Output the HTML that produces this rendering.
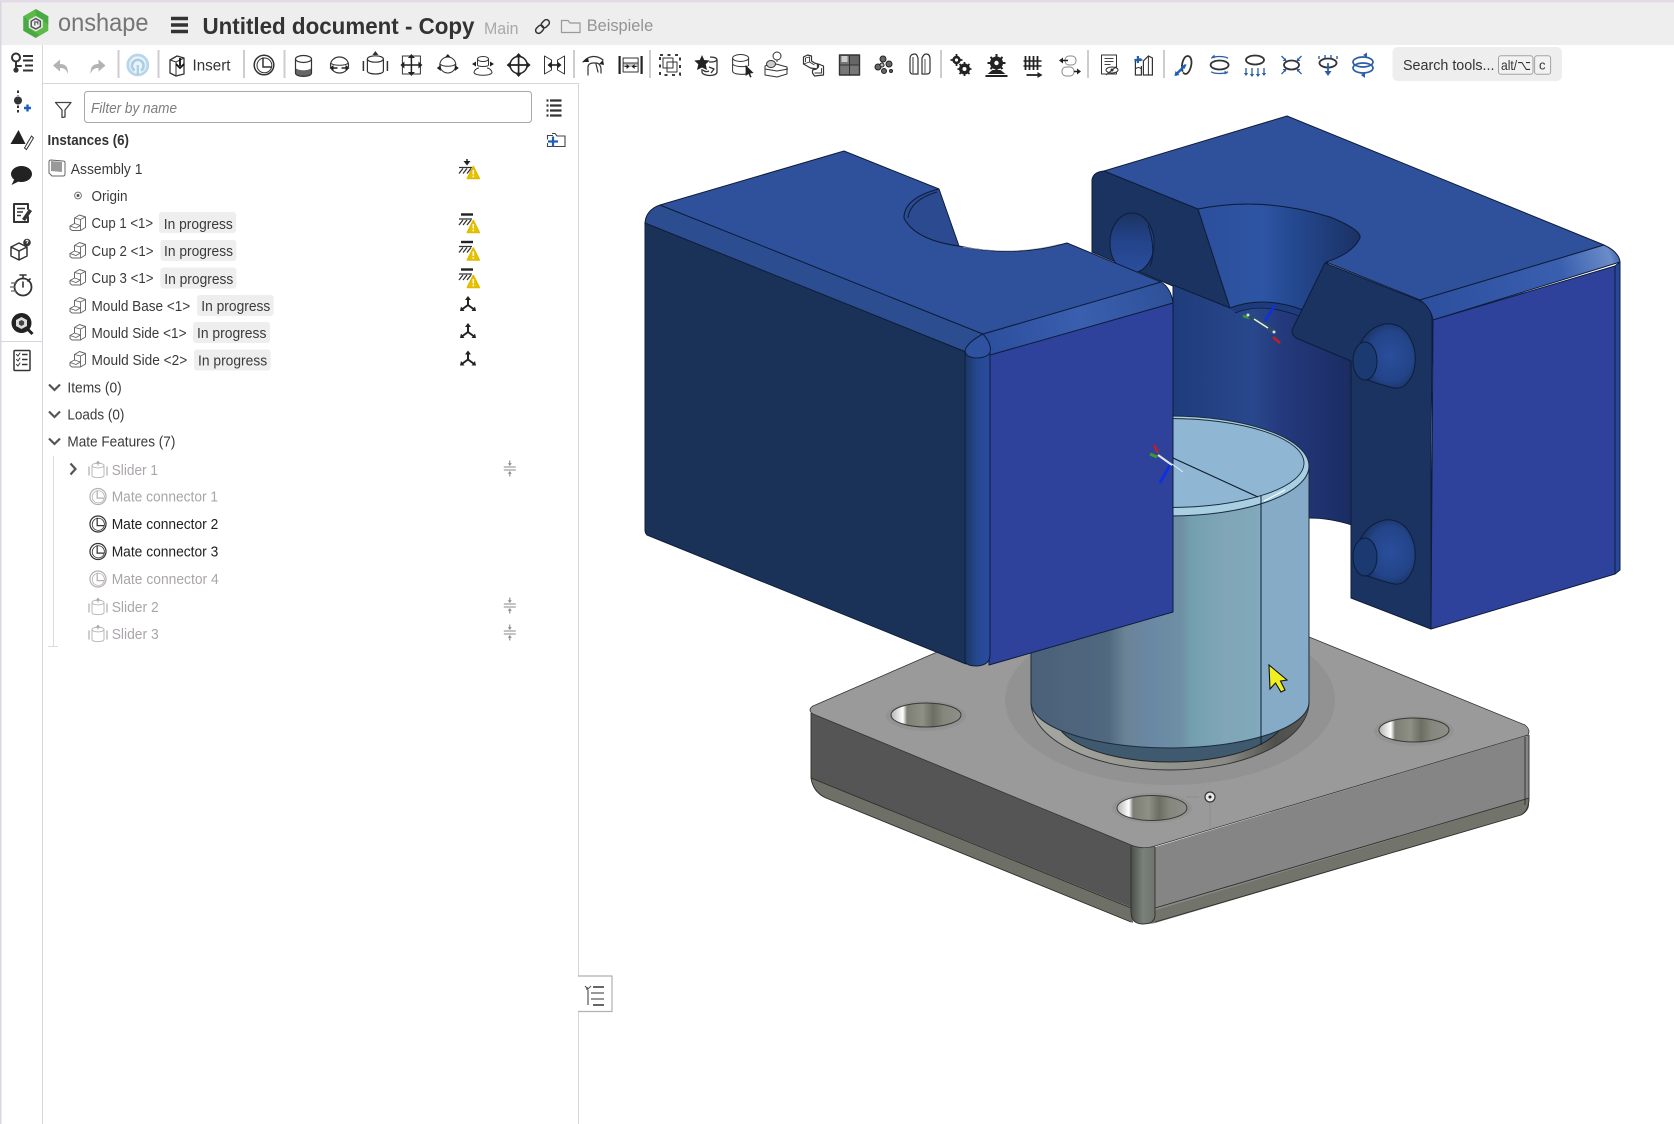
<!DOCTYPE html>
<html><head><meta charset="utf-8"><title>Onshape</title>
<style>
html,body{margin:0;padding:0;background:#fff;width:1674px;height:1124px;overflow:hidden}
svg{display:block}
text{font-family:"Liberation Sans",sans-serif;fill:#333}
.t{font-size:15px;fill:#3a3a3a}
.g{font-size:15px;fill:#aaa5aa}
.d{font-size:15px;fill:#222}
.i{fill:none;stroke:#333;stroke-width:1.5;stroke-linecap:round;stroke-linejoin:round}
.b{fill:none;stroke:#2a5ea8;stroke-width:1.5;stroke-linecap:round;stroke-linejoin:round}
.e{stroke:#0e1d3c;stroke-width:1;stroke-linejoin:round}
.e2{fill:none;stroke:#0e1d3c;stroke-width:1}
.k{fill:none;stroke:#333;stroke-width:1;stroke-linejoin:round}
</style></head><body>
<svg xmlns="http://www.w3.org/2000/svg" width="1674" height="1124" viewBox="0 0 1674 1124">
<defs>
<linearGradient id="pist" x1="1031" x2="1309" y1="0" y2="0" gradientUnits="userSpaceOnUse">
<stop offset="0" stop-color="#4b6079"/><stop offset=".28" stop-color="#50697f"/><stop offset=".34" stop-color="#6b8396"/><stop offset=".43" stop-color="#6a88a4"/><stop offset=".54" stop-color="#6e8fa5"/><stop offset=".58" stop-color="#74a0ae"/><stop offset=".7" stop-color="#80a6b8"/><stop offset=".8" stop-color="#7fa8b8"/><stop offset=".83" stop-color="#85abc6"/><stop offset="1" stop-color="#85abc8"/>
</linearGradient>
<linearGradient id="cav" x1="1173" x2="1352" y1="0" y2="0" gradientUnits="userSpaceOnUse">
<stop offset="0" stop-color="#1f3c7c"/><stop offset=".45" stop-color="#29478c"/><stop offset=".62" stop-color="#24397c"/><stop offset="1" stop-color="#1b2c62"/>
</linearGradient>
<linearGradient id="fun" x1="1198" x2="1360" y1="0" y2="0" gradientUnits="userSpaceOnUse">
<stop offset="0" stop-color="#2c4f9c"/><stop offset=".4" stop-color="#2d55a3"/><stop offset=".6" stop-color="#24488f"/><stop offset="1" stop-color="#1b3264"/>
</linearGradient>
<linearGradient id="cs" x1="964" x2="990" y1="0" y2="0" gradientUnits="userSpaceOnUse">
<stop offset="0" stop-color="#1b3560"/><stop offset=".5" stop-color="#26488e"/><stop offset="1" stop-color="#2a4ca0"/>
</linearGradient>
<linearGradient id="strip" x1="990" y1="345" x2="1170" y2="290" gradientUnits="userSpaceOnUse">
<stop offset="0" stop-color="#2c4f9e"/><stop offset=".5" stop-color="#3a5fae"/><stop offset="1" stop-color="#2e5199"/>
</linearGradient>
<linearGradient id="strip2" x1="1425" y1="310" x2="1620" y2="255" gradientUnits="userSpaceOnUse">
<stop offset="0" stop-color="#2c4f9e"/><stop offset=".7" stop-color="#3a5fae"/><stop offset=".95" stop-color="#6b8cc8"/><stop offset="1" stop-color="#3a5fae"/>
</linearGradient>
<radialGradient id="boss" cx=".55" cy=".5" r=".6"><stop offset="0" stop-color="#2a4e9c"/><stop offset=".65" stop-color="#234488"/><stop offset="1" stop-color="#19305e"/></radialGradient>
<linearGradient id="hl" x1="0" x2="0" y1="0" y2="1"><stop offset="0" stop-color="#1b3360"/><stop offset=".45" stop-color="#234389"/><stop offset="1" stop-color="#2b4f9e"/></linearGradient>
<linearGradient id="hole" x1="0" x2="1" y1="0" y2="0"><stop offset="0" stop-color="#b5b5b0"/><stop offset=".12" stop-color="#e8e8e8"/><stop offset=".17" stop-color="#fff"/><stop offset=".23" stop-color="#7e7e76"/><stop offset=".45" stop-color="#8e9084"/><stop offset=".6" stop-color="#6c6e64"/><stop offset=".75" stop-color="#85867c"/><stop offset="1" stop-color="#8e8f88"/></linearGradient>
<linearGradient id="corn" x1="0" x2="1" y1="0" y2="0"><stop offset="0" stop-color="#4b4f4b"/><stop offset=".5" stop-color="#7a807a"/><stop offset="1" stop-color="#6e736c"/></linearGradient>
<linearGradient id="rec" x1="1031" x2="1309" y1="0" y2="0" gradientUnits="userSpaceOnUse"><stop offset="0" stop-color="#a8a8a2"/><stop offset=".7" stop-color="#8a8a86"/><stop offset=".88" stop-color="#4f4f4c"/><stop offset="1" stop-color="#5a5a56"/></linearGradient>

<g id="part"><path d="M-8 3.500L-3.500 1V-4.500L1.500-7.500 7.500-5.500V5L2.500 8H-6L-8 6.500z" fill="#fff" stroke="#666" stroke-width="1" stroke-linejoin="round"/><path d="M-8 3.500L-2 5.500 2.500 3V8M-3.500 1L2.500 3V-3L-3.500-4.500M2.500-3L7.500-5.500" fill="none" stroke="#666" stroke-width=".9"/></g>
<g id="mc"><circle r="9.800" fill="none" stroke="currentColor" stroke-width="1.500"/><circle cx=".4" cy=".4" r="7.400" fill="none" stroke="currentColor" stroke-width="1"/><path d="M-1-7.600V2H8" fill="none" stroke="currentColor" stroke-width="1.500"/></g>
<g id="cyl"><ellipse cy="-6" rx="8" ry="3.200" fill="none" stroke="currentColor" stroke-width="1.200"/><path d="M-8-6V6c0 4 16 4 16 0V-6" fill="none" stroke="currentColor" stroke-width="1.200"/><path d="M-3-12h6M0-14l-3 4h6z" fill="currentColor" stroke="none"/><path d="M-12-4V6M12-4V6" stroke="currentColor" stroke-width="1.500"/></g>
<g id="warn"><path d="M0-6L-6 6H6z" fill="#e6c400" stroke="#e0bc00" stroke-linejoin="round" stroke-width="1.500"/><path d="M0-2.500V2M0 3.200v1.600" stroke="#fff" stroke-width="1.400"/></g>
<g id="hat"><path d="M-8 0h13M-8 6l4-5M-4 6l4-5M0 6l4-5" stroke="#333" stroke-width="1.300" fill="none"/></g>
<g id="tri"><path d="M0-5V1M0 1L-5.500 5M0 1L5.500 5" stroke="#222" stroke-width="2" fill="none"/><path d="M0-8l-3 4h6zM-8 7l1-4.500 3.500 4.500zM8 7l-1-4.500-3.500 4.500z" fill="#222"/></g>
<g id="sl"><path d="M-6-1.500H6M-6 1.500H6" stroke="#8a8a8a" stroke-width="1.100"/><path d="M0-8v5M0 8V3" stroke="#8a8a8a" stroke-width="1.100"/><path d="M0-2.600l-2-2.600h4zM0 2.600l-2 2.600h4z" fill="#8a8a8a"/></g>
<g id="sd"><g opacity=".45"><ellipse cy="-4" rx="6" ry="2.400" fill="none" stroke="#666"/><path d="M-6-4V6c0 2.800 12 2.800 12 0V-4" fill="none" stroke="#666"/><path d="M0-9l-2.500 3.200h5z" fill="#444"/><path d="M0-7v3" stroke="#444"/><path d="M-9-3V6M9-3V6" stroke="#666" stroke-width="1.400"/></g></g>
</defs>

<!-- title bar -->
<rect width="1674" height="45" fill="#eeeeee"/>
<rect width="1674" height="2.500" fill="#e2dae6"/>
<g transform="translate(35.800,23.500)">
<path d="M0-14.500L12.500-7.200V7.200L0 14.500-12.500 7.200V-7.200z" fill="#5cba47"/>
<path d="M0-14.500L12.500-7.200V1L7-3V-3.500L0-7.500zM-12.500-7.200V7.200L0 14.500 3 11-7 5V-3z" fill="#3f9f45" opacity=".65"/>
<path d="M0-7.500L7-3.500V4L0 8-7 4V-3.500z" fill="#eee"/>
<path d="M0-5L4.600-2.300V3L0 5.500-4.600 3V-2.300z" fill="none" stroke="#555" stroke-width="1.500"/>
<path d="M-1 2V-1.500H2V1" fill="none" stroke="#555" stroke-width="1.200"/>
</g>
<text x="58" y="31" font-size="25" textLength="90.500" lengthAdjust="spacingAndGlyphs" style="fill:#757575">onshape</text>
<path d="M171 18.500h17M171 25h17M171 31.500h17" stroke="#333" stroke-width="3.400"/>
<text x="202.500" y="34" font-size="23" font-weight="700" textLength="272" lengthAdjust="spacingAndGlyphs" style="fill:#333">Untitled document - Copy</text>
<text x="484" y="34" font-size="17" textLength="34.500" lengthAdjust="spacingAndGlyphs" style="fill:#a8a8a8">Main</text>
<g transform="translate(542.500,26.500) rotate(-45)" fill="none" stroke="#333" stroke-width="1.500"><rect x="-8.500" y="-3" width="9" height="6" rx="3"/><rect x="-.5" y="-3" width="9" height="6" rx="3"/></g>
<path d="M561.500 32.500V20.500h6.500l2 2.500h10v9.500z" fill="none" stroke="#999" stroke-width="1.200"/>
<text x="586.700" y="31" font-size="17" textLength="66.500" lengthAdjust="spacingAndGlyphs" style="fill:#949494">Beispiele</text>

<!-- frame lines -->
<rect x="0" y="2" width="1.500" height="1122" fill="#dcd5e0"/>
<rect x="42" y="45" width="1" height="1079" fill="#d8d3dc"/>
<rect x="43" y="83" width="536" height="1" fill="#d8d3dc"/>
<rect x="578" y="84" width="1" height="892" fill="#d8d3dc"/>
<rect x="578" y="1012" width="1" height="112" fill="#d8d3dc"/>
<rect x="1.500" y="341" width="41" height="1" fill="#d8d3dc"/>

<!-- toolbar separators -->
<g fill="#cfcbd0"><rect x="117.500" y="50" width="2" height="28"/><rect x="157.500" y="50" width="2" height="28"/><rect x="243" y="50" width="2" height="28"/><rect x="283.500" y="50" width="2" height="28"/><rect x="573" y="50" width="2" height="28"/><rect x="649" y="50" width="2" height="28"/><rect x="940" y="50" width="2" height="28"/><rect x="1087" y="50" width="2" height="28"/><rect x="1163" y="50" width="2" height="28"/></g>

<!-- left rail icons -->
<g transform="translate(22,63)"><circle cx="-6" cy="-5.500" r="4" class="i" style="stroke-width:2"/><circle cx="-6" cy="7" r="2.600" fill="#333"/><path d="M-6-1.500V7M-6 3h5" class="i" style="stroke-width:2"/><path d="M1-7H11M1-2.500H11M3 2.500H11M1 7.500H11" stroke="#333" stroke-width="2"/></g>
<g transform="translate(21,101.500)"><circle cx="-3" cy="-1" r="4" fill="#333"/><path d="M-3-11v5M-3 4v7" stroke="#333" stroke-width="2" stroke-dasharray="2.500 2"/><path d="M3 6.500H10M6.500 3v7" stroke="#1f5fb5" stroke-width="2.400"/></g>
<g transform="translate(21.500,139)"><path d="M-3-9L-11 5H4z" fill="#222"/><path d="M3 9L10-3 12-1 5 10.500z" fill="#fff" stroke="#333"/></g>
<g transform="translate(21.500,174)"><ellipse rx="10.500" ry="8" fill="#222"/><path d="M-7 5l-3 6 8-4z" fill="#222"/></g>
<g transform="translate(21,213)"><path d="M7-4V-9H-7V9H7V4" class="i" style="stroke-width:2"/><path d="M-4-4.500H4M-4-1H2M-4 2.500H0" stroke="#333" stroke-width="1.500"/><path d="M1 6L8-4l3 2L4 8z" fill="#333"/></g>
<g transform="translate(20,251)"><path d="M-9-4L-1-8 7-4V5L-1 9-9 5zM-9-4L-1 0 7-4M-1 0V9" class="i"/><circle cx="7" cy="-8.500" r="3.800" fill="#333"/><path d="M6-9.500c0-1.600 2.400-1.600 2 0L7-8v.6" stroke="#fff" fill="none"/></g>
<g transform="translate(22,286)"><circle cx="1" cy="1" r="8.500" class="i" style="stroke-width:1.800"/><path d="M1 1V-4M-2-11h6M1-10.500v3M8-7l-2 2" class="i" style="stroke-width:1.600"/><path d="M-11-3h6M-12 1h5M-11 5h5" stroke="#666" stroke-width="1.300"/></g>
<g transform="translate(21.500,323)"><circle r="10" fill="#222"/><path d="M6 6l5 5" stroke="#222" stroke-width="3"/><path d="M0-6L5.500-3V3L0 6-5.500 3V-3z" fill="#ddd"/><path d="M0-3L2.600-1.500V1.500L0 3-2.600 1.500V-1.500z" fill="#444"/></g>
<g transform="translate(22,360.500)"><rect x="-8" y="-10" width="16" height="20" rx="1" class="i"/><path d="M-5.500-6l1.500 1.500 2-3M-5.500-1l1.500 1.500 2-3M-5.500 4l1.500 1.500 2-3" class="i" style="stroke-width:1"/><path d="M0-6h5.500M0-1h5.500M0 4h5.500" stroke="#333" stroke-width="1.400"/></g>

<!-- toolbar icons -->
<g transform="translate(61,65)"><path d="M7 9C7 2 5-1-1-1V-5.500L-8 0.500-1 6.500V3C3 3 5 4 7 9z" fill="#b3b3b3"/></g>
<g transform="translate(97.500,65)"><path d="M-7 9C-7 2-5-1 1-1V-5.500L8 0.500 1 6.500V3C-3 3-5 4-7 9z" fill="#b3b3b3"/></g>
<g transform="translate(137.800,65)"><circle r="10" fill="#eaf3f8" stroke="#b7d6ea" stroke-width="2.800"/><path d="M-3.200 5.500A5.800 5.800 0 1 1 3.200 5.500" fill="none" stroke="#a9cde4" stroke-width="2.600"/><path d="M0 0V10" stroke="#a9cde4" stroke-width="2.200"/></g>
<g transform="translate(177,65)"><path d="M-7-5L0-9 7-7V9L-1 11-7 8z" class="i" style="stroke-width:1.300"/><path d="M-1 11V-3l8-4M-7-5l6 2" class="k"/><path d="M3-7V1M-1-1l4 4 4-4" fill="none" stroke="#111" stroke-width="1.800"/></g>
<text x="192.500" y="70.500" font-size="15.500" textLength="38" lengthAdjust="spacingAndGlyphs" style="fill:#333">Insert</text>
<g transform="translate(264,65)" color="#333"><use href="#mc"/></g>
<g transform="translate(303.500,65)"><path d="M-8 3c3 3 13 3 16 0v5c0 4.500-16 4.500-16 0z" fill="#666"/><ellipse cy="-6" rx="8" ry="3.500" class="i" style="stroke-width:1.200"/><path d="M-8-6V8c0 4.500 16 4.500 16 0V-6" class="i" style="stroke-width:1.200"/></g>
<g transform="translate(339.500,65)"><ellipse rx="9" ry="8" class="i" style="stroke-width:1.200"/><path d="M-9-2c3 3 15 3 18 0" class="k"/><path d="M-8 3H-2M8 3H2" stroke="#222" stroke-width="1.600"/><path d="M-10 3l4-3v6zM10 3L6 0v6z" fill="#222"/></g>
<g transform="translate(375.400,65)" color="#333"><use href="#cyl"/></g>
<g transform="translate(411.400,65)"><rect x="-9" y="-9" width="18" height="18" class="k"/><path d="M0-9V9M-9 0H9" stroke="#222" stroke-width="1.500"/><path d="M0-11l-3.500 4h7zM0 11l-3.500-4h7zM-11 0l4-3.500v7zM11 0L7-3.500v7z" fill="#222"/></g>
<g transform="translate(447.800,65)"><ellipse cy="0" rx="8" ry="8" class="k"/><path d="M-8-1c3 3 13 3 16 0" class="k"/><path d="M0-11l-3 3.500h6zM-11 3l4-3v6zM11 3L7 0v6z" fill="#222"/><path d="M-7 3h-2M7 3h2" stroke="#222"/></g>
<g transform="translate(483,65)"><ellipse cy="-6" rx="5.500" ry="2.500" class="k"/><path d="M-5.500-6v6c0 2 11 2 11 0v-6M-9 8c0-3 3-5 5-5M9 8c0-3-3-5-5-5M-9 8c3 3 15 3 18 0" class="k"/><path d="M-11-1l4-2.500v5zM11-1L7-3.500v5z" fill="#222"/></g>
<g transform="translate(518.600,65)"><circle r="8.500" fill="none" stroke="#222" stroke-width="1.500"/><path d="M0-11V11M-11 0H11" stroke="#222" stroke-width="1.700"/><path d="M0-12l-3 3.500h6zM0 12l-3-3.500h6zM-12 0l3.500-3v6zM12 0L8.500-3v6z" fill="#222"/></g>
<g transform="translate(554.500,65)"><path d="M-10-9V9L-3 5V-5zM10-9V9L3 5V-5z" class="k"/><path d="M-5 0H5" stroke="#222" stroke-width="1.600"/><path d="M-7 0l3.500-3v6zM7 0L3.500-3v6z" fill="#222"/></g>
<g transform="translate(594,65)"><path d="M-11-3C-5-10 3-10 9-5M-6 10V2c0-3 3-4 5-4h3c3 0 5 3 5 6v4M2-1l2 8" class="i" style="stroke-width:1.200"/><path d="M-11-3l5-4 1 4zM9-5L5-1l5 1z" fill="#222"/></g>
<g transform="translate(630.600,65)"><path d="M-11-9V9M11-9V9" stroke="#222" stroke-width="2.200"/><rect x="-7.500" y="-7" width="15" height="14" class="k"/><path d="M-7.500-2h15" stroke="#333"/><path d="M-7 0H7" stroke="#555" stroke-width="4" stroke-opacity=".35"/><path d="M-6 1.500h4M6 1.500H2" stroke="#222"/><path d="M-1 1.500l-3-2.500v5zM1 1.500l3-2.500v5z" fill="#222"/></g>
<g transform="translate(670,65)"><rect x="-10" y="-10" width="20" height="20" fill="none" stroke="#222" stroke-dasharray="3 4.500" stroke-width="1.800"/><rect x="-7" y="-7" width="10" height="10" class="k"/><rect x="-3" y="-3" width="10" height="10" class="k"/></g>
<g transform="translate(706,65)"><path d="M-4-10l2.200 5 5.500.5-4 3.800L1 5-4 2.500-9 5l1.300-5.700-4-3.800 5.500-.5z" fill="#222"/><path d="M4-8c5 0 7 1.500 7 3v12c0 2-3 3.500-7 3.500s-8-1.500-8-3.500V4M3-3c4 0 6 0 8-2M-3 5c2 2 4 2 6 1M3 2l5 2-3 4" class="k" style="stroke-width:1.300"/></g>
<g transform="translate(741.600,65)"><ellipse cx="-1" cy="-7" rx="8" ry="3.500" class="k"/><path d="M-9-7V6c0 4 14 4 16 2M7-7V1M-9-1c2 3 12 3 15 2" class="k"/><path d="M4 0l8 8-3.500.5L10 12 8.500 12.500 7 9l-3 2z" fill="#222"/></g>
<g transform="translate(777,65)"><ellipse cx="0" cy="-9" rx="4" ry="4" class="k"/><path d="M0-5v2M-12 1l5-2 3 2 3-2 11 3v7L0 12l-12-2z" class="k"/><ellipse cx="-6" cy="-1" rx="4.500" ry="3.500" fill="#ccc" stroke="#333"/><path d="M-12 4l12 2 11-2" class="k"/></g>
<g transform="translate(813.500,65)"><path d="M-10-1V-8L-6-10-2-9V-4L1-2 4-1V4L-3 3-10-1z" fill="#fff" stroke="#333" stroke-width="1.200" stroke-linejoin="round"/><path d="M-8-3V-7L-4-8V-3L1 0M-10-1L-4-3" class="k" style="stroke-width:.9"/><path d="M-1 8V5L3 4 5 2V-1L10 1V10L1 11-1 8z" fill="#fff" stroke="#333" stroke-width="1.200" stroke-linejoin="round"/><path d="M1 8H8V3" class="k" style="stroke-width:.9"/></g>
<g transform="translate(849.500,65)"><rect x="-10" y="-10" width="9.500" height="9.500" fill="#777"/><rect x=".5" y="-10" width="9.500" height="9.500" fill="#666"/><rect x="-10" y=".5" width="9.500" height="9.500" fill="#777"/><rect x=".5" y=".5" width="9.500" height="9.500" fill="#777"/><rect x="-8" y="-9" width="6" height="6" fill="#ccc"/><rect x="-10" y="-10" width="20" height="20" class="k" style="stroke:#333;stroke-width:1.400"/><path d="M0-10V10M-10 0H10" stroke="#333"/></g>
<g transform="translate(884,65)" fill="#666" stroke="#222"><circle cx="-1" cy="-6" r="3"/><circle cx="-6" cy="2" r="3"/><circle cx="5" cy="-1" r="3"/><circle cx="0" cy="6" r="2.500"/><circle cx="-2" cy="0" r="2" fill="#bbb"/><circle cx="7" cy="6" r="1.500"/></g>
<g transform="translate(920,65)"><path d="M-10-6c0-4 2-5 5-5 2 0 2 2 3 4v16H-7c-2 0-3-1-3-3zM10-6c0-4-2-5-4-5-2 0-3 2-4 4v16H7c2 0 3-1 3-3z" fill="#fff" stroke="#333" stroke-width="1.200"/><path d="M4-6h2v14H4z" fill="#aaa"/><path d="M-7-8V8" stroke="#333"/></g>
<g transform="translate(960.500,65)" fill="#222"><circle cx="-4" cy="-5" r="4.200"/><circle cx="4" cy="4" r="5.500"/><path d="M-4-11v12M-10-5h12M4-3V11M-3 4h14M-1-1l10 10M9-1L-1 9" stroke="#222" stroke-width="1.800"/><circle cx="4" cy="4" r="2" fill="#fff"/><circle cx="-4" cy="-5" r="1.600" fill="#fff"/></g>
<g transform="translate(996.500,65)" fill="#222"><circle cy="-2" r="6.500"/><path d="M0-11V7M-9-2H9M-6-8L6 4M6-8L-6 4" stroke="#222" stroke-width="2"/><circle cy="-2" r="2.200" fill="#fff"/><path d="M-4 5l-5 4h18l-5-4z"/><path d="M-11 11H11" stroke="#222" stroke-width="2"/></g>
<g transform="translate(1032.500,65)"><path d="M-9-4H9M-9 1H9" stroke="#222" stroke-width="1.400"/><path d="M-7-9V5M-3-9V5M1-9V5M5-9V5" stroke="#222" stroke-width="1.800"/><path d="M-6 10H7" stroke="#222" stroke-width="1.800"/><path d="M10 10L5 7v6z" fill="#222"/></g>
<g transform="translate(1069,65)"><rect x="-4" y="-9" width="11" height="9" rx="4" fill="none" stroke="#888"/><rect x="-7" y="2" width="12" height="9" rx="4" fill="none" stroke="#888"/><path d="M-1-4.500H-8M5 6.500H11" stroke="#222" stroke-width="1.500"/><path d="M-10-4.500l4-3v6zM12 6.500l-4-3v6z" fill="#222"/></g>
<g transform="translate(1109,65)"><rect x="-7.500" y="-10" width="15" height="19" class="k"/><path d="M-4.500-6.500h9M-4.500-3.500h9M-4.500-.5h6" stroke="#444"/><ellipse cx="3" cy="5" rx="6" ry="3" fill="#fff" stroke="#333"/><circle cx="3" cy="5" r="1.500" fill="#333"/><path d="M-3 10l11-9" stroke="#333"/></g>
<g transform="translate(1143.400,65)"><path d="M-2 1V10H-8V-4l3-2h3M-1-5h-4" fill="none" stroke="#333" stroke-width="1.200"/><path d="M-9-5H-2M-5.500-9V-2" stroke="#1f5fb5" stroke-width="2.200"/><path d="M0-4L5-9 9-7V10H0z" fill="none" stroke="#333" stroke-width="1.200"/><path d="M5-9V10M-8 4c2-2 4-2 6 0" fill="none" stroke="#333"/></g>
<g transform="translate(1184.500,65)"><path d="M-2 6C-4-2 0-9 3-9 7-9 8-3 6 3 4 9 1 10-1 8" class="i" style="stroke-width:1.800"/><path d="M-9 10L1 0" stroke="#1f5fb5" stroke-width="2.400"/><path d="M-10 11l1-5 4 4zM2-1l-5 2 3 3z" fill="#1f5fb5"/></g>
<g transform="translate(1219.600,65)"><ellipse rx="9" ry="4.500" fill="none" stroke="#333" stroke-width="1.800"/><path d="M-8-7c3-2 12-2 16 0M-8 7c3 2 12 2 16 0" class="b" style="stroke-width:1.300"/><path d="M-8-8l3-2.500v4zM8 8l-3-2.500v4z" fill="#2a5ea8"/></g>
<g transform="translate(1255,65)"><ellipse cy="-5" rx="9" ry="4.500" fill="none" stroke="#333" stroke-width="1.800"/><path d="M-9 3v6M-3 3v7M3 3v7M9 3v6" stroke="#2a5ea8" stroke-width="1.300"/><path d="M-9 11l-2.200-3h4.400zM-3 12l-2.200-3h4.400zM3 12l-2.200-3h4.400zM9 11l-2.200-3h4.400z" fill="#2a5ea8"/></g>
<g transform="translate(1291.500,65)"><ellipse rx="7.500" ry="4.500" fill="none" stroke="#333" stroke-width="1.800"/><path d="M-10-9l4 4M10-9L6-5M-10 9l4-4M10 9L6 5" stroke="#2a5ea8" stroke-width="1.300"/><path d="M-5-4l-4 0 3-3zM5-4l4 0-3-3zM-5 4l-4 0 3 3zM5 4l4 0-3 3z" fill="#2a5ea8"/></g>
<g transform="translate(1328,65)"><ellipse cy="-2" rx="8.500" ry="4.500" fill="none" stroke="#333" stroke-width="1.800"/><path d="M-9-9v3M-3-10v3M3-10v3M9-9v3" stroke="#2a5ea8" stroke-width="1.400"/><path d="M0-2V8" stroke="#2a5ea8" stroke-width="1.800"/><path d="M0 11l-3.500-5h7z" fill="#2a5ea8"/></g>
<g transform="translate(1363,65)"><ellipse cx="0" cy="-3" rx="10" ry="5" fill="none" stroke="#2a5ea8" stroke-width="1.700"/><ellipse cx="0" cy="3" rx="10" ry="5" fill="none" stroke="#2a5ea8" stroke-width="1.700"/><path d="M0-10l4-2.500v5zM-2 10l4-3v6z" fill="#2a5ea8"/></g>

<!-- search -->
<rect x="1392.500" y="47" width="169.500" height="34" rx="5" fill="#eeeeee"/>
<text x="1403" y="70" font-size="15" textLength="91.500" lengthAdjust="spacingAndGlyphs" style="fill:#333">Search tools...</text>
<rect x="1498.500" y="55.700" width="34.500" height="18.600" rx="2.500" fill="#f2f2f2" stroke="#a5a0a5"/>
<text x="1501" y="70" font-size="14" textLength="30" lengthAdjust="spacingAndGlyphs" style="fill:#333">alt/⌥</text>
<rect x="1534.600" y="55.700" width="16" height="18.600" rx="2.500" fill="#f2f2f2" stroke="#a5a0a5"/>
<text x="1539" y="69.500" font-size="13" style="fill:#333">c</text>

<!-- filter row -->
<path d="M55.500 102.500H71L65 110v7l-3 .5V110z" fill="none" stroke="#444" stroke-width="1.300" stroke-linejoin="round"/>
<rect x="84.500" y="91.500" width="447" height="31" rx="3" fill="#fff" stroke="#aaa6aa"/>
<text x="91" y="113" font-size="15" font-style="italic" textLength="86" lengthAdjust="spacingAndGlyphs" style="fill:#7d7d7d">Filter by name</text>
<path d="M550 102H561.500M550 107H561.500M550 112H561.500M550 117H561.500" transform="translate(0,-1.500)" stroke="#333" stroke-width="2.200"/><path d="M546.500 100.500h2M546.500 105.500h2M546.500 110.500h2M546.500 115.500h2" stroke="#333" stroke-width="2.200"/>

<text x="47.500" y="145" font-size="15" font-weight="700" textLength="81.500" lengthAdjust="spacingAndGlyphs" style="fill:#333">Instances (6)</text>
<path d="M553 135.500h-5.500v4M547.500 143v3.500H565V136h-8l-2-2.500h-3" fill="none" stroke="#444" stroke-width="1.100"/><path d="M548 141.500h10M553 136.500v10" stroke="#1f5fb5" stroke-width="2.200"/>

<!-- tree -->
<g transform="translate(57,168)"><path d="M-8-6Q-8-8-6-8L6-7Q8-7 8-5V6Q8 8 6 8H-5L-8 5z" fill="#fff" stroke="#666"/><path d="M-6-7L5-6V4L-6 3z" fill="#999"/></g>
<text class="t" x="70.800" y="174" textLength="71.600" lengthAdjust="spacingAndGlyphs">Assembly 1</text>
<circle cx="78" cy="195.500" r="3.400" fill="none" stroke="#777"/><circle cx="78" cy="195.500" r="1.500" fill="#555"/>
<text class="t" x="91.500" y="201" textLength="36" lengthAdjust="spacingAndGlyphs">Origin</text>

<g fill="#eeeeee"><rect x="159" y="212" width="77" height="21" rx="3"/><rect x="160.400" y="240" width="76" height="21" rx="3"/><rect x="160.400" y="267.500" width="76" height="21" rx="3"/><rect x="197" y="295" width="76.600" height="21" rx="3"/><rect x="193" y="322" width="77" height="21" rx="3"/><rect x="194" y="349.500" width="76.600" height="21" rx="3"/></g>
<use href="#part" x="78" y="222.500"/><use href="#part" x="78" y="250"/><use href="#part" x="78" y="277"/><use href="#part" x="78" y="305"/><use href="#part" x="78" y="332"/><use href="#part" x="78" y="359"/>
<text class="t" x="91.500" y="228" textLength="61.600" lengthAdjust="spacingAndGlyphs">Cup 1 &lt;1&gt;</text>
<text class="t" x="163.800" y="229" textLength="69" lengthAdjust="spacingAndGlyphs">In progress</text>
<text class="t" x="91.500" y="256" textLength="62" lengthAdjust="spacingAndGlyphs">Cup 2 &lt;1&gt;</text>
<text class="t" x="164" y="256" textLength="69" lengthAdjust="spacingAndGlyphs">In progress</text>
<text class="t" x="91.500" y="283" textLength="62" lengthAdjust="spacingAndGlyphs">Cup 3 &lt;1&gt;</text>
<text class="t" x="164.300" y="284" textLength="69" lengthAdjust="spacingAndGlyphs">In progress</text>
<text class="t" x="91.500" y="311" textLength="98.700" lengthAdjust="spacingAndGlyphs">Mould Base &lt;1&gt;</text>
<text class="t" x="201.300" y="311" textLength="69" lengthAdjust="spacingAndGlyphs">In progress</text>
<text class="t" x="91.500" y="338" textLength="95" lengthAdjust="spacingAndGlyphs">Mould Side &lt;1&gt;</text>
<text class="t" x="197" y="338" textLength="69.400" lengthAdjust="spacingAndGlyphs">In progress</text>
<text class="t" x="91.500" y="365" textLength="95.700" lengthAdjust="spacingAndGlyphs">Mould Side &lt;2&gt;</text>
<text class="t" x="198" y="365.500" textLength="69.200" lengthAdjust="spacingAndGlyphs">In progress</text>

<!-- status icons -->
<g transform="translate(467,164)"><path d="M0-5V-1" stroke="#222" stroke-width="1.500"/><path d="M-3.500-3L0 1.500 3.500-3z" fill="#222"/><use href="#hat" transform="translate(0,3.500)"/></g>
<use href="#warn" x="473.300" y="172.500"/>
<g transform="translate(467,219)"><path d="M-6-4.500H6" stroke="#222" stroke-width="2.400"/><use href="#hat"/></g><use href="#warn" x="473.300" y="226.500"/>
<g transform="translate(467,246.500)"><path d="M-6-4.500H6" stroke="#222" stroke-width="2.400"/><use href="#hat"/></g><use href="#warn" x="473.300" y="254"/>
<g transform="translate(467,274)"><path d="M-6-4.500H6" stroke="#222" stroke-width="2.400"/><use href="#hat"/></g><use href="#warn" x="473.300" y="281.500"/>
<use href="#tri" x="468" y="304"/><use href="#tri" x="468" y="331"/><use href="#tri" x="468" y="358.500"/>

<g fill="none" stroke="#555" stroke-width="2.200"><path d="M49 384.500l5.500 5.500 5.500-5.500M49 411.500l5.500 5.500 5.500-5.500M49 438.500l5.500 5.500 5.500-5.500M70.500 463.500l5 5.500-5 5.500"/></g>
<text class="t" x="67.400" y="392.500" textLength="54.300" lengthAdjust="spacingAndGlyphs">Items (0)</text>
<text class="t" x="67.400" y="419.500" textLength="57" lengthAdjust="spacingAndGlyphs">Loads (0)</text>
<text class="t" x="67.400" y="446.500" textLength="108" lengthAdjust="spacingAndGlyphs">Mate Features (7)</text>
<path d="M53.500 456V646.500M48 646.500H58" stroke="#dcdadc" stroke-width="1" fill="none"/>

<use href="#sd" x="98" y="469.500"/><use href="#sd" x="98" y="606.500"/><use href="#sd" x="98" y="633.500"/>
<text class="g" x="111.700" y="475" textLength="46.300" lengthAdjust="spacingAndGlyphs">Slider 1</text>
<text class="g" x="111.700" y="612" textLength="47" lengthAdjust="spacingAndGlyphs">Slider 2</text>
<text class="g" x="111.700" y="639" textLength="47" lengthAdjust="spacingAndGlyphs">Slider 3</text>
<g color="#b5b0b5"><use href="#mc" transform="translate(98,496.500) scale(.82)"/><use href="#mc" transform="translate(98,579) scale(.82)"/></g>
<g color="#333"><use href="#mc" transform="translate(98,524) scale(.82)"/><use href="#mc" transform="translate(98,551.500) scale(.82)"/></g>
<text class="g" x="111.700" y="501.500" textLength="106.400" lengthAdjust="spacingAndGlyphs">Mate connector 1</text>
<text class="d" x="111.700" y="529" textLength="106.600" lengthAdjust="spacingAndGlyphs">Mate connector 2</text>
<text class="d" x="111.700" y="556.500" textLength="106.600" lengthAdjust="spacingAndGlyphs">Mate connector 3</text>
<text class="g" x="111.700" y="584" textLength="107" lengthAdjust="spacingAndGlyphs">Mate connector 4</text>
<use href="#sl" x="509.800" y="468.500"/><use href="#sl" x="509.800" y="605.500"/><use href="#sl" x="509.800" y="632.500"/>

<!-- panel toggle -->
<path d="M578 976H612V1011.500H578" fill="#fff" stroke="#b5aeb5" stroke-width="1.200"/>
<rect x="586" y="987" width="2" height="3" fill="#888"/>
<path d="M585 986l3 3 3-3" fill="none" stroke="#555"/><path d="M588 990V1005" stroke="#999" stroke-width="2"/><path d="M593 987H604M593 1005H604" stroke="#333" stroke-width="1.500"/><path d="M591 993H604M591 999H604" stroke="#777" stroke-width="1.500"/>

<!-- RIGHT BLOCK -->
<path class="e" d="M1092 180Q1093 172 1104 171L1198 209 1230 308 1173 286 1092 252Z" fill="#1b3360"/>
<path class="e" d="M1173 285L1230 308Q1263 295 1303 310L1293 330 1352 360V525Q1330 518 1310 518H1173Z" fill="url(#cav)"/>
<path d="M1230 308Q1263 295 1303 310L1299 316Q1262 302 1235 313" fill="#1e3c7c" stroke="#0e1d3c" stroke-width=".8"/>
<path class="e" d="M1198 209Q1263 196 1330 217 1362 230 1360 238 1352 254 1328 263L1303 310Q1263 295 1230 308Z" fill="url(#fun)"/>
<path class="e2" d="M1200 206Q1263 193 1332 214 1364 227 1363 239"/>
<path class="e" d="M1325 263L1418 300Q1432 305 1432 320V360L1431 440V629L1351 598V361L1296 338Q1290 333 1293 328Z" fill="#1b3360"/>
<ellipse class="e" cx="1132" cy="243" rx="22" ry="30" fill="url(#hl)"/>
<path d="M1148 225C1154 242 1154 258 1150 266" stroke="#0e1d3c" fill="none"/>
<!-- bosses -->
<path class="e" d="M1360 344C1368 326 1392 315 1407 333 1419 350 1417 372 1407 383 1400 392 1392 388 1367 380Z" fill="url(#boss)"/>
<ellipse class="e" cx="1365" cy="361" rx="12" ry="19" fill="#1c3a72"/>
<path class="e" d="M1360 540C1368 522 1392 511 1407 529 1419 546 1417 568 1407 579 1400 588 1392 584 1367 576Z" fill="url(#boss)"/>
<ellipse class="e" cx="1365" cy="557" rx="12" ry="19" fill="#1c3a72"/>
<!-- right block top + faces -->
<path class="e" d="M1104 171L1287 116 1604 245 1420 300 1326 262Q1352 254 1360 238 1362 230 1330 217 1263 196 1198 209Z" fill="#2f519c"/>
<path class="e" d="M1420 300L1604 245Q1619 252 1620 262L1433 320Q1431 308 1420 300Z" fill="url(#strip2)"/>
<path class="e" d="M1433 320L1615 266V574L1431 629Z" fill="#2f429b"/>
<path class="e" d="M1615 266L1620 262V570L1615 574Z" fill="#26479a"/>
<!-- triad back -->
<path d="M1275 305L1265 321" stroke="#1030e0" stroke-width="2.500"/>
<path d="M1243 316L1250 318" stroke="#3a9a2a" stroke-width="2.500"/>
<path d="M1273 337L1280 343" stroke="#c02020" stroke-width="2.500"/>
<path d="M1250 316L1272 331" stroke="#2a4a70" stroke-width="5" stroke-linecap="round"/>
<path d="M1254 319L1268 328" stroke="#e8eef6" stroke-width="1.500"/>
<circle cx="1248" cy="315" r="1.500" fill="#ddd"/><circle cx="1274" cy="332" r="1.500" fill="#ddd"/>

<!-- BASE PLATE -->
<path d="M811 713L1133 845V908L811 778Z" fill="#555"/>
<path d="M811 778L1133 908V923L826 798Q813 792 811 778Z" fill="#6e6f66"/>
<path d="M1155 847L1529 735V798L1155 910Z" fill="#858585"/>
<path d="M1155 910L1529 798V806Q1528 812 1521 815L1155 923Q1150 924 1143 924L1133 920V908Z" fill="#72736a"/>
<path d="M1131 846H1155V915Q1155 924 1143 924 1131 924 1131 912Z" fill="url(#corn)"/>
<path d="M1131 846V912Q1131 924 1143 924 1155 924 1155 915V847M811 713V778Q813 792 826 798L1131 922M811 778L1131 908M1155 908L1529 798M1155 922L1521 815Q1529 811 1529 798V735M1525 737V805" fill="none" stroke="#2e2e2a" stroke-width=".9"/>
<path d="M813 706L1135 566 1525 725Q1531 730 1528 735L1155 846Q1143 850 1131 845L813 714Q807 710 813 706Z" fill="#9a9a9a" stroke="#333" stroke-width=".8"/>
<ellipse cx="1170" cy="700" rx="165" ry="85" fill="#929292"/>
<ellipse cx="926" cy="716" rx="40" ry="15" fill="#939393"/>
<ellipse cx="1414" cy="731" rx="40" ry="15" fill="#939393"/>
<ellipse cx="1152" cy="808" rx="40" ry="15" fill="#939393"/>
<ellipse cx="926" cy="715" rx="35" ry="12" fill="url(#hole)" stroke="#3a3a36"/>
<ellipse cx="1414" cy="730" rx="35" ry="12" fill="url(#hole)" stroke="#3a3a36"/>
<ellipse cx="1152" cy="808" rx="35" ry="12.500" fill="url(#hole)" stroke="#3a3a36"/>
<ellipse cx="1170" cy="702" rx="139" ry="68" fill="url(#rec)" stroke="#333" stroke-width=".9"/>
<ellipse cx="1170" cy="716" rx="115" ry="46" fill="#3f5a6e" stroke="#222"/>
<path d="M1199 797H1186M1210 802V828" stroke="#888" stroke-width=".7"/>
<circle cx="1210" cy="797" r="5" fill="#e8e8e8" stroke="#333" stroke-width="1.200"/><circle cx="1210" cy="797" r="1.500" fill="#222"/>

<!-- PISTON -->
<path d="M1031 466V702A139 46 0 0 0 1309 702V466Z" fill="url(#pist)" stroke="#1c2c3c"/>
<path d="M1261 495V745" stroke="#0e1d2c"/>
<ellipse cx="1170" cy="466" rx="139" ry="50" fill="#a9cfe3" stroke="#1c2c3c"/>
<ellipse cx="1170" cy="463" rx="134" ry="44.500" fill="#8fb6d2" stroke="#1c2c3c" stroke-width=".9"/>
<path d="M1173 458L1258 497" stroke="#0e1d2c" stroke-width="1.200"/>
<path d="M1261 496V504" stroke="#0e1d2c"/>
<path d="M1264 501L1285 490" stroke="#fff" stroke-width="1"/>
<path d="M1269 665L1270 689 1275.500 683 1281 692 1285 690 1280.500 681 1287 680Z" fill="#f0f020" stroke="#111" stroke-width="1.100"/>

<!-- LEFT BLOCK -->
<path class="e" d="M645 222L966 352V664L647 535Q645 533 645 530Z" fill="#1a3257"/>
<path class="e" d="M989 355L1173 303V612L989 665Z" fill="#2f429b"/>
<path class="e" d="M965 352H990V655Q990 665 977 666 965 666 965 660Z" fill="url(#cs)"/>
<path class="e" d="M660 205L983 334 966 352 645 223Q646 210 660 205Z" fill="#2c4d90"/>
<path class="e" d="M983 334L1161 282Q1171 288 1173 303L990 355Q990 344 983 334Z" fill="url(#strip)"/>
<path class="e" d="M983 334Q992 344 990 352 988 358 975 358 965 357 965 350 968 342 983 334Z" fill="#2f52a0"/>
<path class="e" d="M660 205L844 151 939 189Q904 198 904 218 915 240 959 246 1015 258 1067 243L1161 282 983 334Z" fill="#2f519c"/>
<path class="e" d="M939 189Q904 198 904 218 915 240 959 246Z" fill="#2b4a90"/>
<path class="e2" d="M937 192Q910 200 908 218"/>
<path d="M963 247Q1015 256 1060 244" stroke="#aaa" fill="none" stroke-width=".6"/>

<!-- triad front -->
<path d="M1171 463L1160 483" stroke="#1030e0" stroke-width="3"/>
<path d="M1154 445L1158 453" stroke="#c02020" stroke-width="2.500"/>
<path d="M1150 454L1157 457" stroke="#3a9a2a" stroke-width="3"/>
<path d="M1158 455L1172 465" stroke="#dfe8f0" stroke-width="2"/>
<path d="M1172 464L1183 472" stroke="#e8eef6" stroke-width="1" fill="none"/>
</svg>
</body></html>
